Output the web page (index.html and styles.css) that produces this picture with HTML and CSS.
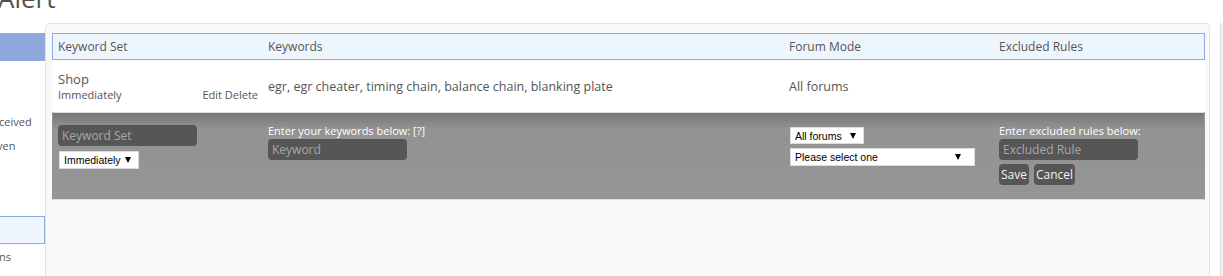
FILE: index.html
```html
<!DOCTYPE html>
<html lang="en">
<head>
<meta charset="utf-8">
<title>Keyword Alert</title>
<link rel="stylesheet" href="styles.css">
</head>
<body>
<div class="page">
  <h1 class="title">Alert</h1>
  <div class="layout">
    <nav class="sidebar">
      <div class="nav-item filled"></div>
      <div class="nav-group first">
        <a class="nav-link">ceived</a>
        <a class="nav-link shift">ven</a>
      </div>
      <div class="nav-item outlined"></div>
      <a class="nav-link last">ns</a>
    </nav>

    <main class="panel">
      <div class="grid-table">
        <div class="row head">
          <div class="cell">Keyword Set</div>
          <div class="cell">Keywords</div>
          <div class="cell">Forum Mode</div>
          <div class="cell">Excluded Rules</div>
        </div>

        <div class="row data">
          <div class="cell set-cell">
            <div class="set-name">Shop</div>
            <div class="set-meta">
              <span class="set-freq">Immediately</span>
              <span class="set-actions"><a class="act">Edit</a> <a class="act">Delete</a></span>
            </div>
          </div>
          <div class="cell center">egr, egr cheater, timing chain, balance chain, blanking plate</div>
          <div class="cell center">All forums</div>
          <div class="cell center"></div>
        </div>

        <div class="row edit">
          <div class="cell stack">
            <input class="dark-input first-input" type="text" placeholder="Keyword Set">
            <div class="fake-select sel-freq"><span>Immediately</span><span class="arrow"></span></div>
          </div>
          <div class="cell stack">
            <label class="edit-label">Enter your keywords below: [?]</label>
            <input class="dark-input" type="text" placeholder="Keyword">
          </div>
          <div class="cell stack">
            <div class="fake-select sel-mode"><span>All forums</span><span class="arrow"></span></div>
            <div class="fake-select sel-forum"><span>Please select one</span><span class="arrow"></span></div>
          </div>
          <div class="cell stack">
            <label class="edit-label">Enter excluded rules below:</label>
            <input class="dark-input" type="text" placeholder="Excluded Rule">
            <div class="buttons">
              <button class="btn" type="button">Save</button>
              <button class="btn" type="button">Cancel</button>
            </div>
          </div>
        </div>
      </div>
    </main>

    <div class="scroll-strip"></div>
  </div>
</div>
</body>
</html>
```

FILE: styles.css
```css
* { box-sizing: border-box; }

html, body {
  margin: 0;
  padding: 0;
  background: #fff;
  overflow: hidden;
}

body {
  font-family: "Open Sans", "Liberation Sans", sans-serif;
  color: #555;
  width: 1223px;
  height: 276px;
}

.page {
  display: flex;
  flex-direction: column;
  height: 276px;
}

.title {
  margin: -17px 0 0 -2px;
  font-size: 26px;
  line-height: 30px;
  font-weight: 400;
  color: #505050;
  height: 30px;
}

.layout {
  margin-top: 10px;
  display: flex;
  flex: 1;
  min-height: 0;
}

/* sidebar */
.sidebar {
  width: 45px;
  flex: none;
  overflow: hidden;
  display: flex;
  flex-direction: column;
  padding-top: 10px;
}

.nav-item {
  height: 28px;
  flex: none;
}
.nav-item.filled { background: #8fa9dc; }
.nav-item.outlined {
  margin-top: 58px;
  background: #eef5fd;
  border: 1px solid #8eaadf;
  border-left: none;
}

.nav-group.first { margin-top: 49px; display: flex; flex-direction: column; }

.nav-link {
  display: block;
  font-size: 11px;
  line-height: 24px;
  height: 24px;
  color: #555;
  white-space: nowrap;
  text-indent: -1px;
}
.nav-link.shift { text-indent: -3px; }
.nav-link.last { line-height: 26px; }

/* panel */
.panel {
  flex: 1;
  margin-right: 10px;
  background: #f9f9f9;
  border: 1px solid #e2e2e2;
  border-bottom: none;
  border-radius: 5px 5px 0 0;
  padding: 9px 4px 0 6px;
}

.grid-table {
  display: flex;
  flex-direction: column;
}

.row {
  display: grid;
  grid-template-columns: 210px 521px 210px 210px;
  border: 1px solid transparent;
}

.cell {
  padding: 0 5px;
  min-width: 0;
}

.row.head {
  height: 27px;
  background: #eef6fd;
  border-color: #8eaadf;
  font-size: 12px;
  line-height: 25px;
  color: #555;
}

.row.data {
  height: 52px;
  border-top: none;
  background: #fff;
  border-color: #fff;
  font-size: 12.5px;
}

.center {
  display: flex;
  align-items: center;
  padding-top: 1px;
}

.set-cell {
  display: flex;
  flex-direction: column;
  justify-content: center;
}
.set-name { font-size: 13px; line-height: 16px; }
.set-meta {
  display: flex;
  justify-content: space-between;
  font-size: 11px;
  line-height: 13px;
  padding-top: 1px;
}
.act { color: #555; }

.row.edit {
  height: 88px;
  border-left-color: #959595;
  border-right-color: #959595;
  border-top-color: #dcdcdc;
  border-bottom-color: #e0e0e0;
  background: linear-gradient(#787878 0, #939393 16px, #959595 100%);
}

.stack {
  display: flex;
  flex-direction: column;
  align-items: flex-start;
  padding-top: 10px;
}

.dark-input {
  width: 139px;
  height: 21px;
  border: none;
  border-radius: 4px;
  background: #565656;
  color: #eee;
  font-family: "Open Sans", "Liberation Sans", sans-serif;
  font-size: 12px;
  padding: 0 4px;
  outline: none;
}
.dark-input::placeholder { color: #a8a8a8; }
.first-input { margin-top: 2px; }

.edit-label {
  color: #fff;
  font-size: 11px;
  line-height: 16px;
  white-space: nowrap;
}

.fake-select {
  display: flex;
  align-items: center;
  justify-content: space-between;
  background: #fff;
  border: 1px solid #dcdcdc;
  font-family: "Liberation Sans", Arial, sans-serif;
  font-size: 10.5px;
  color: #000;
  padding: 0 7px 0 4px;
  margin-left: 1px;
}
.arrow {
  width: 0;
  height: 0;
  border-left: 3px solid transparent;
  border-right: 3px solid transparent;
  border-top: 6px solid #000;
}
.sel-freq { width: 80px; height: 18px; margin-top: 5px; }
.sel-mode { width: 74px; height: 17px; margin-top: 4px; }
.sel-forum { width: 185px; height: 18px; margin-top: 4px; padding-right: 13px; }

.buttons {
  display: flex;
  gap: 5px;
  margin-top: 4px;
}
.btn {
  height: 21px;
  border: none;
  border-radius: 4px;
  background: #565656;
  color: #f2f2f2;
  font-family: "Open Sans", "Liberation Sans", sans-serif;
  font-size: 12px;
  padding: 0 2px;
}

.scroll-strip {
  width: 3px;
  flex: none;
  background: #f2f2f2;
  border-left: 1px solid #e0e0e0;
}
```
